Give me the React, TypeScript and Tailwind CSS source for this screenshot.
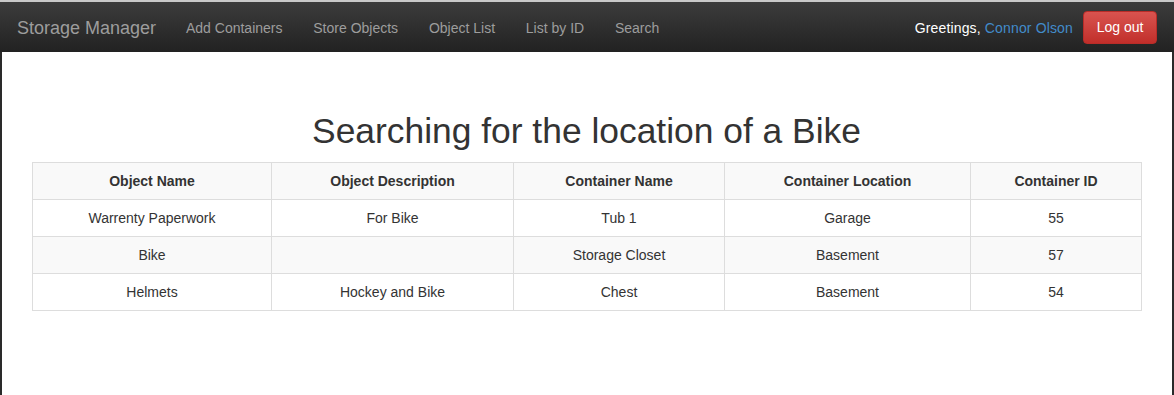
const navLinks = ["Add Containers", "Store Objects", "Object List", "List by ID", "Search"];

const columns = [
  { label: "Object Name", width: "w-[239px]" },
  { label: "Object Description", width: "w-[242px]" },
  { label: "Container Name", width: "w-[211px]" },
  { label: "Container Location", width: "w-[246px]" },
  { label: "Container ID", width: "w-[171px]" },
];

const rows = [
  ["Warrenty Paperwork", "For Bike", "Tub 1", "Garage", "55"],
  ["Bike", "", "Storage Closet", "Basement", "57"],
  ["Helmets", "Hockey and Bike", "Chest", "Basement", "54"],
];

function Navbar() {
  return (
    <nav className="h-[50px] pt-[2px] flex items-center justify-between bg-gradient-to-b from-[#3c3c3c] to-[#222222] text-[14px]">
      <div className="flex items-center h-full">
        <a className="pl-[17px] pr-[14.5px] text-[18px] text-[#9d9d9d]">Storage Manager</a>
        {navLinks.map((link) => (
          <a key={link} className="px-[15.4px] text-[#9d9d9d]">
            {link}
          </a>
        ))}
      </div>
      <div className="flex items-center pr-[17px]">
        <span className="text-white tracking-[0.15px]">
          Greetings, <span className="text-[#428bca]">Connor Olson</span>
        </span>
        <button
          type="button"
          className="ml-[10px] -mt-[2px] h-[33px] w-[74px] rounded-[4px] border border-[#b92c28] bg-gradient-to-b from-[#d9534f] to-[#c12e2a] text-white"
        >
          Log out
        </button>
      </div>
    </nav>
  );
}

export default function App() {
  return (
    <div className="w-[1174px] h-[395px] flex flex-col overflow-hidden font-['Liberation_Sans',Arial,sans-serif] text-[#333333]">
      <div className="h-[2px] bg-[#c9c9c9]" />
      <Navbar />
      <main className="flex-1 bg-white border-l-2 border-r-2 border-[#2a2a2a] pl-[30px] pr-[31px]">
        <h1 className="mt-[59px] mb-[11px] text-center text-[35.4px] leading-[40px] text-[#333333]">
          Searching for the location of a Bike
        </h1>
        <table className="w-full table-fixed border-collapse text-[14px] leading-[20px]">
          <colgroup>
            {columns.map((c) => (
              <col key={c.label} className={c.width} />
            ))}
          </colgroup>
          <tbody>
            <tr className="bg-[#f9f9f9]">
              {columns.map((c) => (
                <th key={c.label} className="border border-[#dddddd] p-[8px] font-bold text-center">
                  {c.label}
                </th>
              ))}
            </tr>
            {rows.map((row, i) => (
              <tr key={i} className={i % 2 === 1 ? "bg-[#f9f9f9]" : "bg-white"}>
                {row.map((cell, j) => (
                  <td key={j} className="border border-[#dddddd] p-[8px] text-center">
                    {cell}
                  </td>
                ))}
              </tr>
            ))}
          </tbody>
        </table>
      </main>
    </div>
  );
}
